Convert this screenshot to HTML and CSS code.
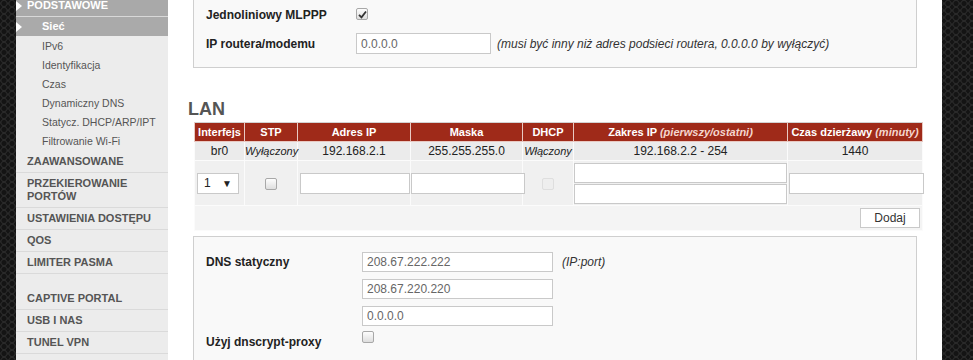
FILE: index.html
```html
<!DOCTYPE html>
<html>
<head>
	<meta charset="utf-8" />
	<title>Sieć</title>
	<link rel="stylesheet" href="styles.css">
</head>
<body>
	<div class="wrap">
		<nav class="menu">
			<div class="head active">PODSTAWOWE</div>
			<div class="sub current">Sieć</div>
			<div class="sub">IPv6</div>
			<div class="sub">Identyfikacja</div>
			<div class="sub">Czas</div>
			<div class="sub">Dynamiczny DNS</div>
			<div class="sub">Statycz. DHCP/ARP/IPT</div>
			<div class="sub">Filtrowanie Wi-Fi</div>
			<div class="head">ZAAWANSOWANE</div>
			<div class="head">PRZEKIEROWANIE PORTÓW</div>
			<div class="head">USTAWIENIA DOSTĘPU</div>
			<div class="head">QOS</div>
			<div class="head">LIMITER PASMA</div>
			<div class="spacer"></div>
			<div class="head">CAPTIVE PORTAL</div>
			<div class="head">USB I NAS</div>
			<div class="head">TUNEL VPN</div>
		</nav>

		<main class="content">
			<div class="box first">
				<div class="row">
					<label class="lbl">Jednoliniowy MLPPP</label>
					<span class="cb checked"><svg width="9" height="9" viewBox="0 0 9 9"><path d="M1 4.8 L3.5 7.3 L8 1.5" fill="none" stroke="#333" stroke-width="1.8"/></svg></span>
				</div>
				<div class="row">
					<label class="lbl">IP routera/modemu</label>
					<input class="txt short" type="text" value="0.0.0.0" />
					<span class="note">(musi być inny niż adres podsieci routera, 0.0.0.0 by wyłączyć)</span>
				</div>
			</div>

			<h2 class="title">LAN</h2>
			<table class="lan">
				<colgroup>
					<col style="width:50px">
					<col style="width:53px">
					<col style="width:113px">
					<col style="width:112px">
					<col style="width:51px">
					<col style="width:214px">
					<col style="width:135px">
				</colgroup>
				<tr class="thead">
					<th>Interfejs</th>
					<th>STP</th>
					<th>Adres IP</th>
					<th>Maska</th>
					<th>DHCP</th>
					<th>Zakres IP <i>(pierwszy/ostatni)</i></th>
					<th>Czas dzierżawy <i>(minuty)</i></th>
				</tr>
				<tr class="data">
					<td>br0</td>
					<td><i class="small">Wyłączony</i></td>
					<td>192.168.2.1</td>
					<td>255.255.255.0</td>
					<td><i class="small">Włączony</i></td>
					<td>192.168.2.2 - 254</td>
					<td>1440</td>
				</tr>
				<tr class="edit">
					<td><span class="sel"><span>1</span><span class="arr">▼</span></span></td>
					<td><span class="cb"></span></td>
					<td class="left"><input class="txt ip" type="text" /></td>
					<td class="left"><input class="txt mask" type="text" /></td>
					<td><span class="cb off"></span></td>
					<td class="left"><input class="txt range" type="text" /><input class="txt range" type="text" /></td>
					<td class="left"><input class="txt lease" type="text" /></td>
				</tr>
				<tr class="foot">
					<td colspan="7"><button class="btn">Dodaj</button></td>
				</tr>
			</table>

			<div class="box second">
				<div class="row dns">
					<label class="lbl">DNS statyczny</label>
					<div class="stack">
						<input class="txt wide" type="text" value="208.67.222.222" />
						<input class="txt wide" type="text" value="208.67.220.220" />
						<input class="txt wide" type="text" value="0.0.0.0" />
					</div>
					<span class="note">(IP:port)</span>
				</div>
				<div class="row crypt">
					<label class="lbl">Użyj dnscrypt-proxy</label>
					<span class="cb"></span>
				</div>
				<div class="row">
					<label class="lbl"></label>
					<input class="txt wide" type="text" />
				</div>
			</div>
		</main>
	</div>
</body>
</html>
```

FILE: styles.css
```css
*{
	margin: 0;
	padding: 0;
	box-sizing: border-box;
}
body{
	height: 360px;
	overflow: hidden;
	font-family: "Liberation Sans", Arial, sans-serif;
	font-size: 12px;
	color: #222;
	background-color: #1a1a1a;
	background-image:
		radial-gradient(circle, #141414 0 2px, #2a2a2a 3px, transparent 4px),
		radial-gradient(circle, #141414 0 2px, #2a2a2a 3px, transparent 4px);
	background-size: 8px 7px;
	background-position: 0 0, 4px 3.5px;
}
.wrap{
	display: flex;
	margin-left: 16px;
	width: 926px;
}
.menu{
	width: 152px;
	flex: none;
	background: #ececec;
	margin-top: -5px;
	padding-bottom: 40px;
}
.head{
	position: relative;
	padding: 4px 8px 4px 11px;
	line-height: 13px;
	font-size: 11px;
	font-weight: bold;
	color: #555;
	border-bottom: 1px solid #dadada;
}
.head.active{
	color: #fff;
	background: #a9a9a9;
	border-bottom: 1px solid #d8d8d8;
}
.sub{
	position: relative;
	padding-left: 26px;
	line-height: 19px;
	font-size: 10.5px;
	color: #555;
}
.sub.current{
	color: #fff;
	font-weight: bold;
	font-size: 11px;
	background: #aaaaaa;
}
.sub.current + .sub{
	margin-top: 1px;
}
.head.active::before,
.sub.current::before{
	content: '';
	position: absolute;
	left: 0;
	top: 50%;
	margin-top: -5px;
	border-left: 6px solid #fff;
	border-top: 5px solid transparent;
	border-bottom: 5px solid transparent;
}
.spacer{
	height: 14px;
}
.content{
	width: 774px;
	flex: none;
	background: #fff;
	padding: 0 20px;
}
.box{
	margin: 0 5px;
	background: #f9f9f9;
	border: 1px solid #cfcfcf;
	padding: 0 12px;
}
.box.first{
	margin-top: -2px;
	padding-top: 1px;
	padding-bottom: 9px;
}
.row{
	display: flex;
	align-items: center;
	min-height: 29px;
}
.lbl{
	width: 150px;
	flex: none;
	font-weight: bold;
	font-size: 12px;
	color: #222;
}
.cb{
	display: inline-block;
	width: 12px;
	height: 12px;
	border: 1px solid #a8a8a8;
	border-radius: 2px;
	background: linear-gradient(#fdfdfd, #dedede);
	vertical-align: middle;
	line-height: 0;
}
.cb.checked{
	margin-top: -1px;
	padding: 1px 0 0 1px;
}
.cb.off{
	border-color: #dedede;
	background: #eee;
}
.txt{
	height: 21px;
	border: 1px solid #c9c9c9;
	background: #fff;
	font-family: "Liberation Sans", Arial, sans-serif;
	font-size: 12px;
	color: #666;
	padding: 0 4px;
	outline: none;
}
.short{
	width: 135px;
}
.note{
	margin-left: 6px;
	font-style: italic;
	color: #333;
}
.title{
	margin: 30px 0 2px;
	font-size: 18px;
	line-height: 22px;
	color: #555;
}
.lan{
	margin-left: 6px;
	width: 728px;
	table-layout: fixed;
	border-collapse: collapse;
	border: 1px solid #d2d2d2;
}
.lan th{
	height: 19px;
	background: #9f2a19;
	color: #fff;
	font-size: 11px;
	font-weight: bold;
	border: 1px solid #e9c9c2;
	border-top: 0;
	white-space: nowrap;
	overflow: hidden;
}
.lan th i{
	color: #f4d6ce;
}
.lan td{
	text-align: center;
	border: 1px solid #fbfbfb;
	white-space: nowrap;
}
.data td{
	height: 19px;
	background: #ebebeb;
	font-size: 12px;
}
.small{
	font-size: 11px;
}
.edit td{
	height: 45px;
	background: #f0f0f0;
	overflow: visible;
}
.edit td.left{
	text-align: left;
}
.sel{
	display: flex;
	justify-content: space-between;
	align-items: center;
	width: 42px;
	height: 21px;
	margin-left: 2px;
	padding: 0 6px 0 6px;
	border: 1px solid #c9c9c9;
	background: #fff;
	font-size: 12px;
	color: #222;
}
.sel .arr{
	font-size: 10px;
}
.ip{
	width: 110px;
	margin-left: 2px;
}
.mask{
	width: 114px;
}
.range{
	display: block;
	width: 213px;
	height: 20px;
}
.range + .range{
	margin-top: 1px;
}
.lease{
	width: 135px;
	margin-left: 1px;
}
.foot td{
	height: 25px;
	background: #f4f4f4;
	text-align: right;
	padding-right: 2px;
}
.btn{
	width: 60px;
	height: 20px;
	border: 1px solid #c9c9c9;
	background: #fff;
	font-family: "Liberation Sans", Arial, sans-serif;
	font-size: 12px;
	color: #333;
}
.box.second{
	margin-top: 5px;
	padding-top: 15px;
	height: 200px;
}
.second .lbl{
	width: 156px;
}
.row.dns{
	align-items: flex-start;
}
.row.dns .lbl{
	line-height: 20px;
}
.row.dns .note{
	line-height: 20px;
	margin-left: 9px;
}
.stack{
	display: flex;
	flex-direction: column;
	gap: 7px;
}
.wide{
	width: 191px;
	height: 20px;
}
.row.crypt{
	min-height: 26px;
	align-items: flex-end;
}
.row.crypt .cb{
	margin-bottom: 9px;
}
.row.crypt .lbl{
	margin-bottom: 3px;
}
.row.crypt + .row{
	margin-top: 6px;
}
```
